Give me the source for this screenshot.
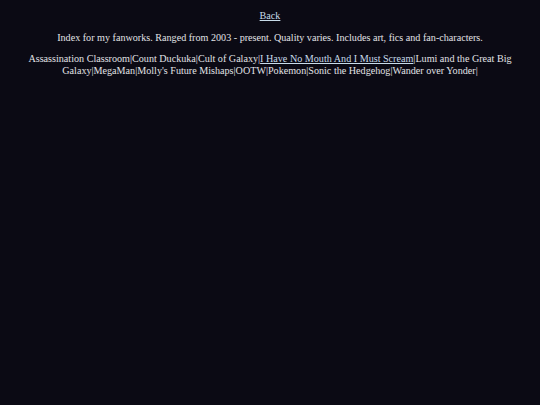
export default function App() {
  const items: { t: string; link?: boolean }[] = [
    { t: "Assassination Classroom" },
    { t: "Count Duckuka" },
    { t: "Cult of Galaxy" },
    { t: "I Have No Mouth And I Must Scream", link: true },
    { t: "Lumi and the Great Big Galaxy" },
    { t: "MegaMan" },
    { t: "Molly's Future Mishaps" },
    { t: "OOTW" },
    { t: "Pokemon" },
    { t: "Sonic the Hedgehog" },
    { t: "Wander over Yonder" },
  ];
  return (
    <div className="min-h-[405px] bg-[#0b0a14] text-[#e2e2e6] text-center text-[10.15px] leading-[12px] px-[5px] pt-[10px] [font-family:'Liberation_Serif',serif]">
      <div>
        <a href="#" className="underline text-[#c8dcea]">Back</a>
      </div>
      <p className="mt-[10px]">
        Index for my fanworks. Ranged from 2003 - present. Quality varies. Includes art, fics and fan-characters.
      </p>
      <p className="mt-[9px]">
        {items.map((it, i) => (
          <span key={i}>
            {it.link ? (
              <a href="#" className="underline text-[#c8dcea]">{it.t}</a>
            ) : (
              it.t
            )}
            |
          </span>
        ))}
      </p>
    </div>
  );
}
